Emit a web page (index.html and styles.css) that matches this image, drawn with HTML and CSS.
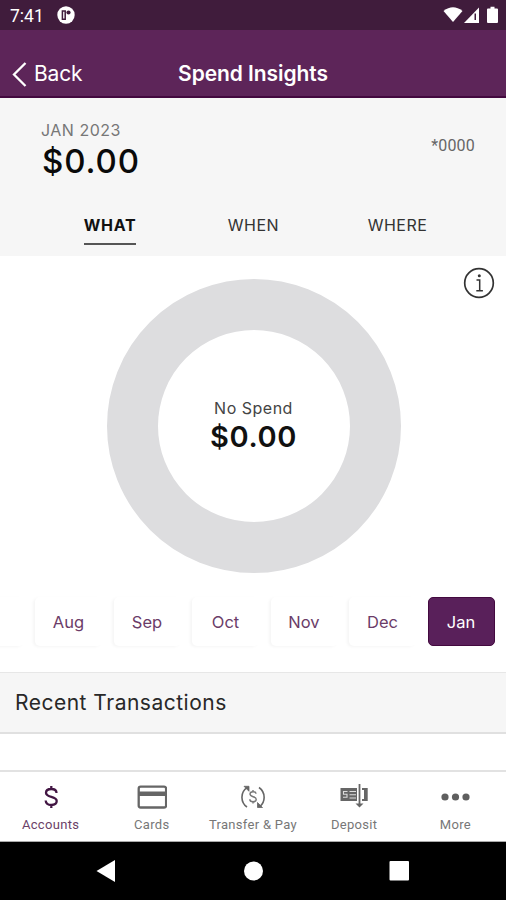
FILE: index.html
```html
<!DOCTYPE html>
<html lang="en">
<head>
<meta charset="utf-8">
<title>Spend Insights</title>
<link rel="stylesheet" href="styles.css">
</head>
<body>
<div class="screen">
  <div class="status">
    <span class="time">7:41</span>
    <svg class="status-app" width="18" height="18" viewBox="0 0 18 18"><circle cx="9" cy="9" r="8.700" fill="#fff"/><path d="M5.400 5h2.800v8.300H5.400z" fill="none" stroke="#401c3c" stroke-width="1.500"/><circle cx="11.500" cy="6.500" r="2.100" fill="#401c3c"/></svg>
    <svg class="status-icons" width="56" height="18" viewBox="0 0 56 18"><path d="M.5 5Q10-2.500 19.500 5L10 16z" fill="#fff"/><path d="M21 17 36 1.500V17z" fill="#fff"/><path d="M31.500 7.500H33V14h-1.500z" fill="#401c3c"/><path d="M45 2.500h2.500V.7h4v1.800H54q1 0 1 1V16q0 1-1 1h-9q-1 0-1-1V3.500q0-1 1-1z" fill="#fff"/></svg>
  </div>
  <header class="header">
    <div class="back"><svg width="15" height="25" viewBox="0 0 15 25"><path d="M13.500 1 2 12.500l11.500 11.500" fill="none" stroke="#fff" stroke-width="2.300"/></svg><span>Back</span></div>
    <h1>Spend Insights</h1>
  </header>
  <section class="summary">
    <div class="balance">
      <div>
        <div class="period">JAN 2023</div>
        <div class="amount">$0.00</div>
      </div>
      <div class="account">*0000</div>
    </div>
    <nav class="tabs"><span class="tab active">WHAT</span><span class="tab">WHEN</span><span class="tab">WHERE</span></nav>
  </section>
  <section class="chart">
    <svg class="info" width="32" height="32" viewBox="0 0 32 32" fill="none" stroke="#333"><circle cx="16" cy="16" r="14.300" stroke-width="1.700"/><circle cx="16.300" cy="8.700" r="1.500" fill="#333" stroke="none"/><path d="M13.500 13h3.200v10.500M13.300 23.800h6.600" stroke-width="1.500"/></svg>
    <div class="donut">
      <div class="label">No Spend</div>
      <div class="total">$0.00</div>
    </div>
  </section>
  <div class="months">
    <span class="month"></span><span class="month">Aug</span><span class="month">Sep</span><span class="month">Oct</span><span class="month">Nov</span><span class="month">Dec</span><span class="month selected">Jan</span>
  </div>
  <h2 class="recent"><span>Recent Transactions</span></h2>
  <div class="list"></div>
  <nav class="bottom">
    <div class="item current"><svg width="30" height="28" viewBox="0 0 30 28" fill="none" stroke="#421643" stroke-width="2.300"><path d="M20.500 10C20.500 7.300 18.500 6 15.300 6 12 6 10 7.500 10 9.800c0 5.400 10.700 2.900 10.700 8.300 0 2.400-2.200 3.900-5.400 3.900-3.300 0-5.600-1.600-5.600-4.400M15.300 3v3M15.300 22v3"/></svg><span>Accounts</span></div>
    <div class="item"><svg width="30" height="28" viewBox="0 0 30 28"><rect x="1.700" y="3.700" width="27.400" height="20.800" rx="2" fill="none" stroke="#666" stroke-width="2.300"/><path d="M1.500 8.500h28v4.500h-28z" fill="#666"/></svg><span>Cards</span></div>
    <div class="item"><svg width="30" height="28" viewBox="0 0 30 28" fill="none" stroke="#666" stroke-width="1.600"><path d="M9 24C2.500 19.500 2 9.500 9 4.700M21 4.500c6.700 4.800 6.800 14.500.5 19.300"/><path d="M6 3.300h5v5zM19.500 19.500v5h5z" fill="#666" stroke-width=".8"/><path d="M18 10.800c0-1.500-1.200-2.100-3-2.100s-3 .8-3 2.400c0 3.500 6.200 1.800 6.200 5.200 0 1.700-1.300 2.500-3.200 2.500s-3.200-.9-3.200-2.500M15 7v2M15 18.500v2" stroke="#777" stroke-width="1.400"/></svg><span>Transfer &amp; Pay</span></div>
    <div class="item"><svg width="30" height="28" viewBox="0 0 30 28"><path d="M1.500 5h16.500v13H1.500zM23 5h5.700v13H23v-2h2V7h-2z" fill="#666"/><path d="M8.500 8.500h-4v2.700h3.500v3H4M10.500 8.500H17M10.500 11.800H17M10.500 15H17" fill="none" stroke="#ddd" stroke-width="1.100"/><path d="M20.500 1v20" stroke="#666" stroke-width="1.800"/><path d="M16.500 20.500h8l-4 4z" fill="#666"/></svg><span>Deposit</span></div>
    <div class="item"><svg width="30" height="28" viewBox="0 0 30 28" fill="#5f5f5f"><circle cx="5" cy="14" r="3.600"/><circle cx="15.500" cy="14" r="3.600"/><circle cx="26" cy="14" r="3.600"/></svg><span>More</span></div>
  </nav>
  <div class="system">
    <svg width="20" height="22" viewBox="0 0 20 22"><path d="M.5 11 19 0v22z" fill="#fff"/></svg>
    <svg width="20" height="20" viewBox="0 0 20 20"><circle cx="10.500" cy="10" r="9.500" fill="#fff"/></svg>
    <svg width="20" height="20" viewBox="0 0 20 20"><rect x=".5" width="19.500" height="19.500" rx="1" fill="#fff"/></svg>
  </div>
</div>
</body>
</html>
```

FILE: styles.css
```css
* { box-sizing: border-box; }
body { margin: 0; font-family: Inter, sans-serif; background: #fff; }
.screen { width: 506px; height: 900px; display: flex; flex-direction: column; overflow: hidden; }
.screen > * { flex-shrink: 0; }
.status { height: 30px; background: #401c3c; color: #fff; display: flex; align-items: center; padding: 0 7px 0 10px; }
.time { font: 17.500px/30px Roboto, sans-serif; width: 47px; padding-top: 1px; }
.status-icons { margin-left: auto; }
.header { height: 68px; background: #5d2559; border-bottom: 2px solid #43093f; color: #fff; display: grid; grid-template-columns: 1fr auto 1fr; align-items: end; padding: 0 12px 7px; }
.back { display: flex; align-items: center; gap: 7px; font-size: 21px; line-height: 30px; letter-spacing: -.2px; }
h1 { margin: 0; font-size: 21px; line-height: 30px; font-weight: 600; letter-spacing: -.08px; }
.summary { height: 158px; background: #f6f6f6; }
.balance { height: 106px; padding: 22px 31px 0 41px; display: flex; justify-content: space-between; }
.period { font-size: 16px; line-height: 20px; color: #777; letter-spacing: .5px; }
.amount { font-size: 33px; line-height: 42px; font-weight: 550; color: #0a0a0a; letter-spacing: .9px; padding-left: 1px; }
.account { font: 16px/20px Roboto, sans-serif; color: #666; margin-top: 16px; letter-spacing: .2px; }
.tabs { display: grid; grid-template-columns: repeat(3, 144px); justify-content: center; justify-items: center; padding-left: 1px; }
.tab { font-size: 16px; line-height: 20px; padding-top: 11px; color: #333; letter-spacing: .5px; height: 41px; }
.tab.active { font-weight: 650; color: #111; border-bottom: 2px solid #555; letter-spacing: .7px; margin-left: 1px; }
.chart { height: 340px; padding: 23px 0 0 1px; position: relative; display: flex; justify-content: center; align-items: flex-start; }
.info { position: absolute; right: 11px; top: 11px; }
.donut { width: 294px; height: 294px; border: 51px solid #dddddf; border-radius: 50%; text-align: center; padding-top: 67px; }
.label { font-size: 16px; line-height: 22px; color: #444; letter-spacing: .5px; }
.total { font-size: 29px; line-height: 36px; font-weight: 600; color: #111; letter-spacing: .6px; }
.months { height: 76px; display: flex; justify-content: flex-end; gap: 11.500px; padding: 1px 11.500px 0 0; }
.month { flex: 0 0 67px; height: 49px; border-radius: 5px; font-size: 16.500px; line-height: 50px; text-align: center; color: #6b3c68; box-shadow: -2px 1px 3px rgba(0,0,0,.04); }
.month.selected { background: #59205a; border: 1px solid #43093f; line-height: 48px; color: #fff; box-shadow: none; }
.recent { margin: 0; height: 62px; background: #f6f6f6; border-top: 1px solid #e7e7e7; border-bottom: 2px solid #e0e0e0; padding: 0 15px; font-size: 21px; line-height: 60px; font-weight: 400; color: #282828; letter-spacing: .5px; }
.list { height: 36px; }
.bottom { height: 72px; border-top: 2px solid #e2e2e2; border-bottom: 1px solid #aaa; display: grid; grid-template-columns: repeat(5, 1fr); }
.item { display: flex; flex-direction: column; align-items: center; padding-top: 11px; font: 13px/18px Roboto, sans-serif; color: #777; letter-spacing: .3px; white-space: nowrap; }
.item span { margin-top: 5px; }
.item.current { color: #6b4168; }
.system { height: 58px; background: #000; display: flex; justify-content: space-between; align-items: center; padding: 0 97px 0 96px; }
```
